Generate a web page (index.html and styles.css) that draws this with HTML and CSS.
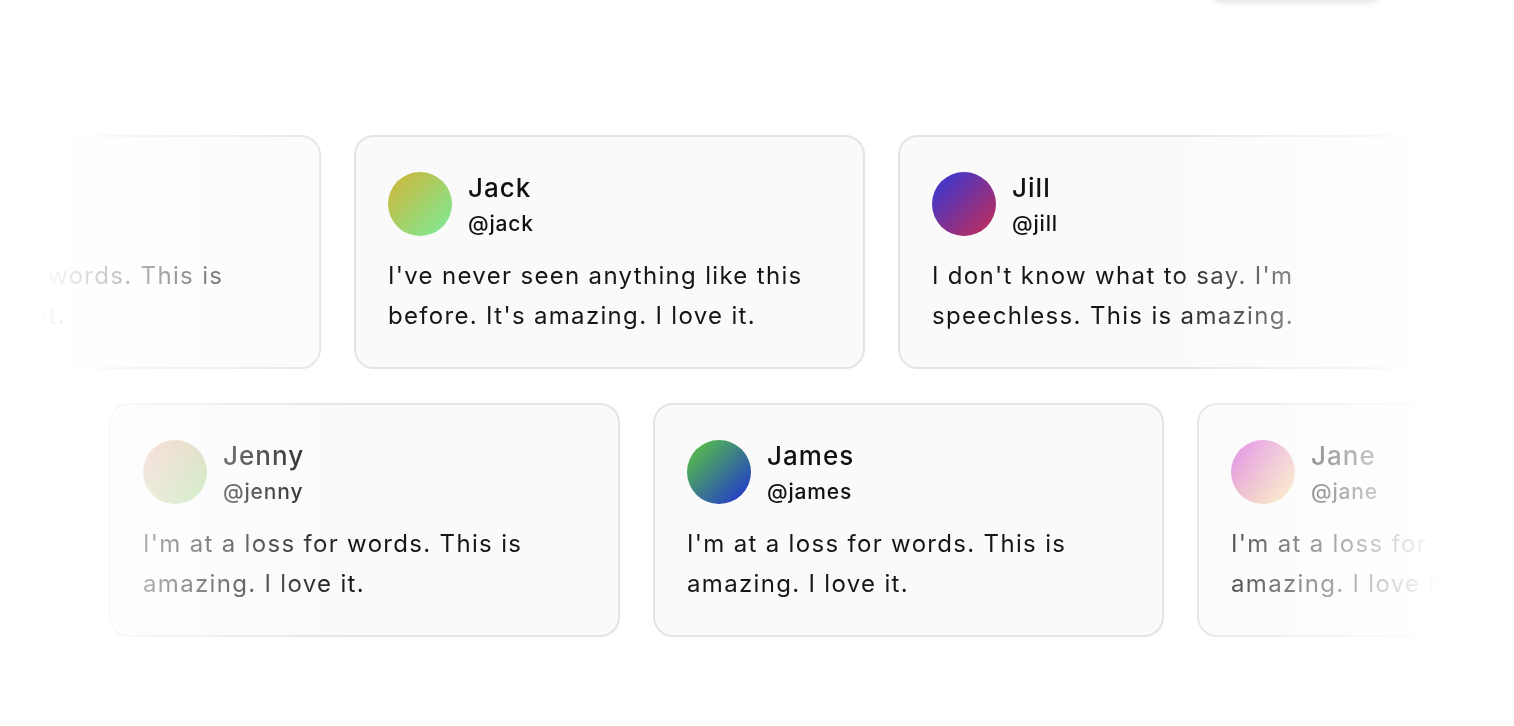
FILE: index.html
```html
<!DOCTYPE html>
<html lang="en">
<head>
    <meta charset="UTF-8">
    <meta name="viewport" content="width=device-width, initial-scale=1.0">
    <title>Testimonials</title>
    <link rel="stylesheet" href="styles.css">
</head>
<body>
    <!-- bottom edge of the floating toolbar above -->
    <div class="toolbar"></div>

    <section class="marquee">
        <div class="row row-one">
            <div class="card">
                <div class="card-head">
                    <div class="avatar av-jenny"></div>
                    <div class="who">
                        <div class="name">Jenny</div>
                        <div class="handle">@jenny</div>
                    </div>
                </div>
                <p class="quote">I'm at a loss for words. This is amazing. I love it.</p>
            </div>
            <div class="card">
                <div class="card-head">
                    <div class="avatar av-jack"></div>
                    <div class="who">
                        <div class="name">Jack</div>
                        <div class="handle">@jack</div>
                    </div>
                </div>
                <p class="quote">I've never seen anything like this before. It's amazing. I love it.</p>
            </div>
            <div class="card">
                <div class="card-head">
                    <div class="avatar av-jill"></div>
                    <div class="who">
                        <div class="name">Jill</div>
                        <div class="handle">@jill</div>
                    </div>
                </div>
                <p class="quote">I don't know what to say. I'm speechless. This is amazing.</p>
            </div>
        </div>

        <div class="row row-two">
            <div class="card">
                <div class="card-head">
                    <div class="avatar av-jenny"></div>
                    <div class="who">
                        <div class="name">Jenny</div>
                        <div class="handle">@jenny</div>
                    </div>
                </div>
                <p class="quote">I'm at a loss for words. This is amazing. I love it.</p>
            </div>
            <div class="card">
                <div class="card-head">
                    <div class="avatar av-james"></div>
                    <div class="who">
                        <div class="name">James</div>
                        <div class="handle">@james</div>
                    </div>
                </div>
                <p class="quote">I'm at a loss for words. This is amazing. I love it.</p>
            </div>
            <div class="card">
                <div class="card-head">
                    <div class="avatar av-jane"></div>
                    <div class="who">
                        <div class="name">Jane</div>
                        <div class="handle">@jane</div>
                    </div>
                </div>
                <p class="quote">I'm at a loss for words. This is amazing. I love it.</p>
            </div>
        </div>
    </section>
</body>
</html>
```

FILE: styles.css
```css
body {
    margin: 0;
    background: #ffffff;
    font-family: Inter, "Noto Sans", sans-serif;
    color: #111111;
    height: 100vh;
    overflow: hidden;
    position: relative;
}

.toolbar {
    position: absolute;
    top: -40px;
    left: 1210px;
    width: 170px;
    height: 40px;
    border-radius: 10px;
    background: #ffffff;
    box-shadow: 0 2px 6px rgba(0, 0, 0, 0.12);
}

.marquee {
    padding-top: 135px;
    display: flex;
    flex-direction: column;
    gap: 34px;
    overflow: hidden;
    /* 양 옆이 흐려지는 효과 */
    -webkit-mask-image: linear-gradient(to right, transparent 40px, #000 350px, #000 1160px, transparent 1440px);
    mask-image: linear-gradient(to right, transparent 40px, #000 350px, #000 1160px, transparent 1440px);
}

.row {
    display: flex;
    gap: 33px;
}
.row-one {
    margin-left: -190px;
}
.row-two {
    margin-left: 109px;
}

.card {
    flex: 0 0 511px;
    box-sizing: border-box;
    background: #fafafa;
    border: 2px solid #e4e4e4;
    border-radius: 20px;
    padding: 35px 32px 31px;
}

.card-head {
    display: flex;
    align-items: flex-start;
    gap: 16px;
}

.avatar {
    width: 64px;
    height: 64px;
    border-radius: 50%;
    flex-shrink: 0;
}
.av-jack  { background: linear-gradient(135deg, #d2b434, #7aec9c); }
.av-jill  { background: linear-gradient(135deg, #2e38dc, #c92c52); }
.av-jenny { background: linear-gradient(135deg, #e9a89c, #a6e49a); }
.av-james { background: linear-gradient(135deg, #5ccc3c, #1c2ed6); }
.av-jane  { background: linear-gradient(135deg, #d868e4, #f6e49c); }

.name {
    font-size: 26px;
    font-weight: 500;
    line-height: 32px;
    letter-spacing: 0.04em;
}
.handle {
    font-size: 21px;
    font-weight: 500;
    line-height: 40px;
    letter-spacing: 0.04em;
}

.quote {
    margin: 12px 0 0;
    font-size: 24px;
    line-height: 40px;
    letter-spacing: 0.055em;
    color: #161616;
}
```
